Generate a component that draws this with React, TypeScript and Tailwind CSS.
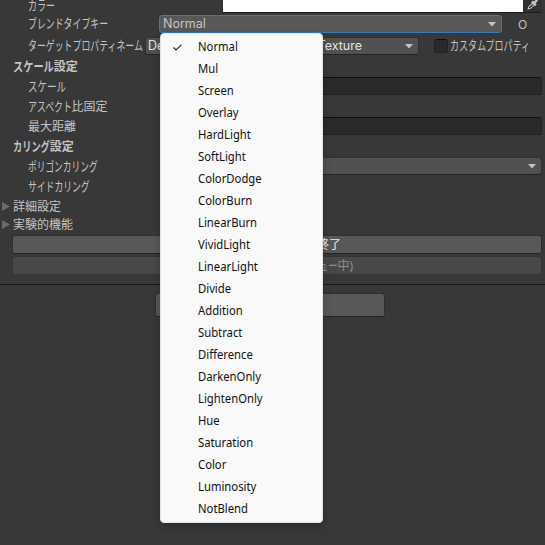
import React from "react";

const KANA = /([\u30a0-\u30ff]+)/;
const KANA_SIZE = 13;

function Kana({ text, pitch = 9 }: { text: string; pitch?: number }) {
  return (
    <span className={`relative whitespace-nowrap leading-none ${KANA.test(text) ? "top-0" : "top-px"}`}>
      {text.split(KANA).filter(Boolean).map((run, i) =>
        KANA.test(run) ? (
          <span
            key={i}
            className="inline-block origin-left text-[13px] leading-none"
            style={{ transform: `scaleX(${pitch / KANA_SIZE})`, marginRight: -run.length * (KANA_SIZE - pitch) }}
          >
            {run}
          </span>
        ) : (
          <span key={i}>{run}</span>
        ),
      )}
    </span>
  );
}

function Arrow({ className = "" }: { className?: string }) {
  return (
    <svg width="8" height="5" viewBox="0 0 8 5" className={`shrink-0 ${className}`}>
      <path d="M0 0h8L4 4.6z" fill="#c4c4c4" />
    </svg>
  );
}

function Field() {
  return <div className="ml-auto mr-[3px] h-[18px] w-[382px] rounded-[3px] border border-[#212121] border-t-[#0d0d0d] bg-[#2a2a2a]" />;
}

function Foldout({ text }: { text: string }) {
  return (
    <div className="flex h-[18px] items-center pl-[2px]">
      <svg width="8" height="9" viewBox="0 0 8 9" className="mr-[3px]">
        <path d="M0 0v9l8-4.5z" fill="#6b6b6b" />
      </svg>
      <Kana text={text} />
    </div>
  );
}

const MODES = [
  "Normal", "Mul", "Screen", "Overlay", "HardLight", "SoftLight", "ColorDodge", "ColorBurn",
  "LinearBurn", "VividLight", "LinearLight", "Divide", "Addition", "Subtract", "Difference",
  "DarkenOnly", "LightenOnly", "Hue", "Saturation", "Color", "Luminosity", "NotBlend",
];

function Menu() {
  return (
    <div className="absolute left-[160px] top-[33px] h-[490px] w-[163px] rounded-[4px] border border-[#e4e4e4] bg-[#f9f9f9] pt-[2px] font-['Noto_Sans','Noto_Sans_CJK_JP',sans-serif] text-[12px] text-[#111] shadow-[0_4px_10px_rgba(0,0,0,0.22)]">
      {MODES.map((mode, i) => (
        <div key={mode} className="flex h-[22px] items-center">
          <span className="flex w-[37px] pl-[12px]">
            {i === 0 && (
              <svg width="9" height="7" viewBox="0 0 9 7" fill="none">
                <path d="M.5 3.5 3 6 8.5.7" stroke="#222" strokeWidth="1.1" />
              </svg>
            )}
          </span>
          <span className="origin-left scale-x-[0.94] leading-none">{mode}</span>
        </div>
      ))}
    </div>
  );
}

export default function App() {
  return (
    <div className="relative h-[545px] w-[545px] overflow-hidden bg-[#383838] font-['Inter','Noto_Sans_CJK_JP',sans-serif] text-[12px] text-[#c4c4c4]">
      <div className="flex h-[13px] items-end">
        <div className="flex h-[13px] w-[222px] items-center pb-[3px] pl-[28px]">
          <Kana text="カラー" />
        </div>
        <div className="flex h-[13px] w-[320px] rounded-b-[3px] border-b border-[#1c1c1c] bg-[#303030]">
          <div className="ml-px h-[12px] w-[300px] bg-white" />
          <svg width="12" height="11" viewBox="0 0 12 11" className="ml-[4px]">
            <path d="M1.2 8.7 1.8 6.7 5.5 3 7.3 4.8 3.6 8.3z" fill="none" stroke="#c4c4c4" strokeWidth="1.1" />
            <path d="M5 1.4 8.9 5.3M6.8 3.4 10.2 0" stroke="#c4c4c4" strokeWidth="2.4" />
          </svg>
        </div>
      </div>
      <div className="flex h-[22px] items-center">
        <div className="w-[159px] shrink-0 pl-[28px]"><Kana text="ブレンドタイプキー" pitch={8.9} /></div>
        <div className="flex h-[18px] w-[343px] shrink-0 items-center justify-between rounded-[3px] border border-[#3a79bb] bg-[#585858] pl-[3px] pr-[5px] text-[12.5px]">
          <span className="leading-none">Normal</span>
          <Arrow />
        </div>
        <span className="relative top-px ml-[16px] text-[12px]">O</span>
      </div>
      <div className="flex h-[22px] items-center">
        <div className="w-[145px] shrink-0 pl-[28px]"><Kana text="ターゲットプロパティネーム" pitch={8.9} /></div>
        <div className="flex h-[18px] w-[146px] shrink-0 items-center rounded-[3px] border border-[#303030] border-b-[#242424] bg-[#515151] pl-[2px] text-[12.5px] text-[#e4e4e4]">Default</div>
        <div className="flex h-[18px] w-[128px] shrink-0 items-center justify-between rounded-[3px] border border-[#303030] border-b-[#242424] bg-[#515151] pr-[5px] text-[12.5px] text-[#e4e4e4]">
          <span className="flex w-[70px] justify-end leading-none">MainTexture</span>
          <Arrow />
        </div>
        <div className="ml-[15px] h-[14px] w-[14px] shrink-0 rounded-[3px] border border-[#212121] border-t-[#0d0d0d] bg-[#2a2a2a]" />
        <div className="ml-[2px]"><Kana text="カスタムプロパティ" pitch={9} /></div>
      </div>
      <div className="flex h-[19px] items-center pl-[13px] font-bold"><Kana text="スケール設定" pitch={10.2} /></div>
      <div className="flex h-[20px] items-center pl-[28px]"><Kana text="スケール" pitch={9.5} /><Field /></div>
      <div className="flex h-[20px] items-center pl-[28px]"><Kana text="アスペクト比固定" pitch={8.9} /></div>
      <div className="flex h-[20px] items-center pl-[28px]"><Kana text="最大距離" /><Field /></div>
      <div className="flex h-[20px] items-center pl-[13px] font-bold"><Kana text="カリング設定" pitch={9.2} /></div>
      <div className="flex h-[20px] items-center pl-[28px]">
        <Kana text="ポリゴンカリング" pitch={8.7} />
        <div className="ml-auto mr-[3px] flex h-[18px] w-[382px] items-center justify-end rounded-[3px] border border-[#303030] border-b-[#242424] bg-[#515151] pr-[5px]"><Arrow /></div>
      </div>
      <div className="flex h-[20px] items-center pl-[28px]"><Kana text="サイドカリング" pitch={8.8} /></div>
      <div className="pt-px">
        <Foldout text="詳細設定" />
        <Foldout text="実験的機能" />
      </div>
      <div className="ml-[12px] mt-[2px] flex h-[19px] w-[530px] items-center rounded-[3px] border border-[#303030] border-b-[#242424] bg-[#585858] text-[#eee]">
        <span className="w-[328px] text-right leading-none"><Kana text="プレビュー終了" /></span>
      </div>
      <div className="ml-[12px] mt-[2px] flex h-[19px] w-[530px] items-center rounded-[3px] border border-[#353535] bg-[#484848] text-[#8e8e8e]">
        <span className="w-[341px] text-right leading-none"><Kana text="ベイク(プレビュー中)" pitch={9.5} /></span>
      </div>
      <div className="mt-[9px] h-px bg-[#1a1a1a]" />
      <div className="ml-[155px] mt-[8px] h-[24px] w-[230px] rounded-[3px] border border-[#303030] border-b-[#242424] bg-[#585858]" />
      <Menu />
    </div>
  );
}
